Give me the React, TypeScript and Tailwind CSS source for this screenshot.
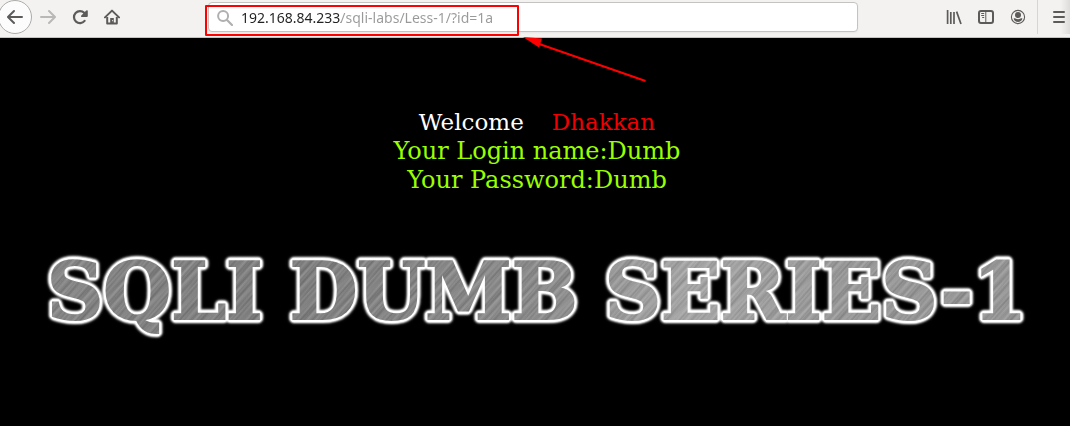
import React from "react";

const iconButton =
  "flex h-8 w-8 shrink-0 items-center justify-center text-[#5c5b59] disabled:text-[#b9b8b6]";

function BackIcon() {
  return (
    <svg viewBox="0 0 16 16" className="h-4 w-4" fill="currentColor" aria-hidden="true">
      <path d="M15 7H3.414l4.293-4.293a1 1 0 0 0-1.414-1.414l-6 6a1 1 0 0 0 0 1.414l6 6a1 1 0 0 0 1.414-1.414L3.414 9H15a1 1 0 0 0 0-2z" />
    </svg>
  );
}

function ForwardIcon() {
  return (
    <svg viewBox="0 0 16 16" className="h-4 w-4" fill="currentColor" aria-hidden="true">
      <path d="M1 9h11.586l-4.293 4.293a1 1 0 0 0 1.414 1.414l6-6a1 1 0 0 0 0-1.414l-6-6a1 1 0 0 0-1.414 1.414L12.586 7H1a1 1 0 0 0 0 2z" />
    </svg>
  );
}

function ReloadIcon() {
  return (
    <svg viewBox="0 0 16 16" className="h-4 w-4" aria-hidden="true">
      <path
        d="M12.6 11.9A6 6 0 1 1 12.2 3.8L13.6 5.4"
        fill="none"
        stroke="currentColor"
        strokeWidth="2.2"
        strokeLinecap="round"
      />
      <path d="M15 1.2a.8.8 0 0 1 .8.8v5a1 1 0 0 1-1 1h-5a.8.8 0 0 1-.5-1.4l5-5.1a.9.9 0 0 1 .7-.3z" fill="currentColor" />
    </svg>
  );
}

function HomeIcon() {
  return (
    <svg viewBox="0 0 16 16" className="h-4 w-4" fill="none" stroke="currentColor" aria-hidden="true">
      <path d="M1 8.4L8 1.6l7 6.8" strokeWidth="2" strokeLinecap="round" strokeLinejoin="round" />
      <path d="M3.2 8v6.6h9.6V8" strokeWidth="2" strokeLinejoin="round" />
      <path d="M6.2 9h3.6v5.6H6.2z" fill="currentColor" stroke="none" />
      <path d="M8.2 11h.8v1.2h-.8z" fill="#f3f2f1" stroke="none" />
    </svg>
  );
}

function SearchIcon() {
  return (
    <svg viewBox="0 0 16 16" className="h-4 w-4 shrink-0" fill="none" stroke="#b0b0b0" strokeLinecap="round" aria-hidden="true">
      <circle cx="6.1" cy="6.1" r="5" strokeWidth="2" />
      <path d="M10 10l5 5" strokeWidth="2.2" />
    </svg>
  );
}

function LibraryIcon() {
  return (
    <svg viewBox="0 0 16 16" className="h-4 w-4" fill="none" stroke="currentColor" strokeWidth="1.7" aria-hidden="true">
      <path d="M1.6 1v14M4.8 3v12M8 3v12M10.6 2.6L15 15" />
    </svg>
  );
}

function SidebarIcon() {
  return (
    <svg viewBox="0 0 16 16" className="h-4 w-4" fill="none" stroke="currentColor" aria-hidden="true">
      <rect x="1" y="2" width="14" height="12" rx="2" strokeWidth="2" />
      <path d="M7.8 2v12" strokeWidth="1" />
      <path d="M3.2 4.5h3M3.2 6.5h3M4.2 8.5h2" strokeWidth="1" />
    </svg>
  );
}

function AccountIcon() {
  return (
    <svg viewBox="0 0 16 16" className="h-4 w-4" fill="currentColor" aria-hidden="true">
      <circle cx="8" cy="8" r="6.6" fill="none" stroke="currentColor" strokeWidth="1.1" />
      <circle cx="8" cy="6" r="3" />
      <path d="M3.6 9.6c.5-.6 1.200-.5 1.900-.1 1.500.9 3.500.9 5 0 .7-.4 1.400-.5 1.900.1-.4 2-2.200 3.400-4.400 3.400s-4-1.400-4.400-3.400z" />
    </svg>
  );
}

function MenuIcon() {
  return (
    <svg viewBox="0 0 12 14" className="h-[14px] w-3" stroke="currentColor" strokeWidth="2" strokeLinecap="round" aria-hidden="true">
      <path d="M1 2h10M1 7h10M1 12h10" />
    </svg>
  );
}

function Toolbar() {
  return (
    <header className="flex items-center border-b border-[#c4c3c1] bg-[#f3f2f1] pb-[3px]">
      <nav aria-label="Navigation" className="mr-20 -ml-0.5 flex items-center">
        <button
          type="button"
          aria-label="Back"
          className="flex h-[34px] w-[34px] shrink-0 items-center justify-center rounded-full border border-[#adacaa] bg-[#fcfcfc] text-[#5c5b59]"
        >
          <BackIcon />
        </button>
        <button type="button" aria-label="Forward" disabled className={iconButton}>
          <ForwardIcon />
        </button>
        <button type="button" aria-label="Reload" className={iconButton}>
          <ReloadIcon />
        </button>
        <button type="button" aria-label="Home" className={iconButton}>
          <HomeIcon />
        </button>
      </nav>

      <div className="relative min-w-0 flex-1">
        <label className="flex h-[30px] items-center gap-2 rounded border border-[#c4c3c1] bg-white px-2 pt-px shadow-xs">
          <SearchIcon />
          <input
            type="text"
            aria-label="Address"
            defaultValue="192.168.84.233/sqli-labs/Less-1/?id=1a"
            className="min-w-0 flex-1 bg-[linear-gradient(90deg,#222_100px,#999_100px)] bg-clip-text font-['Noto_Sans',sans-serif] text-sm text-transparent caret-[#333] outline-none"
          />
        </label>
        <div className="pointer-events-none absolute top-[3px] -left-[3px] h-[31px] w-[314px] rounded-[1px] border-2 border-[#fe0000]" />
        <svg
          viewBox="0 0 124 46"
          className="pointer-events-none absolute top-[35px] left-[315px] h-[46px] w-[124px]"
          aria-hidden="true"
        >
          <path d="M12 5.500L122.500 44" stroke="#fe0000" strokeWidth="2" />
          <path d="M0 0l19 1.500-3 9z" fill="#fe0000" />
        </svg>
      </div>

      <div className="ml-20 flex items-center">
        <button type="button" aria-label="Library" className={iconButton}>
          <LibraryIcon />
        </button>
        <button type="button" aria-label="Sidebars" className={iconButton}>
          <SidebarIcon />
        </button>
        <button type="button" aria-label="Account" className={iconButton}>
          <AccountIcon />
        </button>
        <div className="ml-[3px] h-[34px] w-px bg-[#d6d5d3]" />
        <button
          type="button"
          aria-label="Open menu"
          className="flex h-[34px] w-8 items-center justify-end bg-linear-to-r from-transparent from-70% to-[#dddcda] pr-[5px] text-[#5c5b59]"
        >
          <MenuIcon />
        </button>
      </div>
    </header>
  );
}

export default function App() {
  return (
    <div className="flex min-h-screen flex-col bg-black">
      <Toolbar />
      <main className="flex flex-1 flex-col items-center overflow-hidden pt-[70px] pl-1 font-['DejaVu_Serif',serif]">
        <p className="flex gap-7 text-[23px] leading-[29px] text-white">
          <span>Welcome</span>
          <span className="text-[#f00000]">Dhakkan</span>
        </p>
        <p className="text-center text-2xl leading-[29px] text-[#99ff00]">
          Your Login name:Dumb
          <br />
          Your Password:Dumb
        </p>
        <h1 className="mt-[51px] bg-[repeating-linear-gradient(131deg,#ffffff1c_0px,#00000010_2px,#ffffff08_3px,#00000014_5px,#ffffff18_7px,#00000008_11px,#ffffff1c_13px),repeating-linear-gradient(136deg,#00000014_0px,#ffffff14_3px,#0000000c_8px,#ffffff10_11px,#00000014_17px),linear-gradient(100deg,#858585,#7c7c7c_25%,#8a8a8a_50%,#a8a8a8_65%,#999_80%,#969696)] bg-clip-text px-3 text-[78px] leading-[92px] font-bold whitespace-nowrap text-transparent [-webkit-text-stroke:2px_transparent] [filter:drop-shadow(1px_1px_0_#fff)_drop-shadow(-1px_-1px_0_#fff)_drop-shadow(1px_-1px_0_#fff)_drop-shadow(-1px_1px_0_#fff)_drop-shadow(0_0_1px_#fff)_drop-shadow(0_0_1px_#fff)_drop-shadow(0_0_1px_#ffffffb0)]">
          SQLI DUMB SERIES-1
        </h1>
      </main>
    </div>
  );
}
